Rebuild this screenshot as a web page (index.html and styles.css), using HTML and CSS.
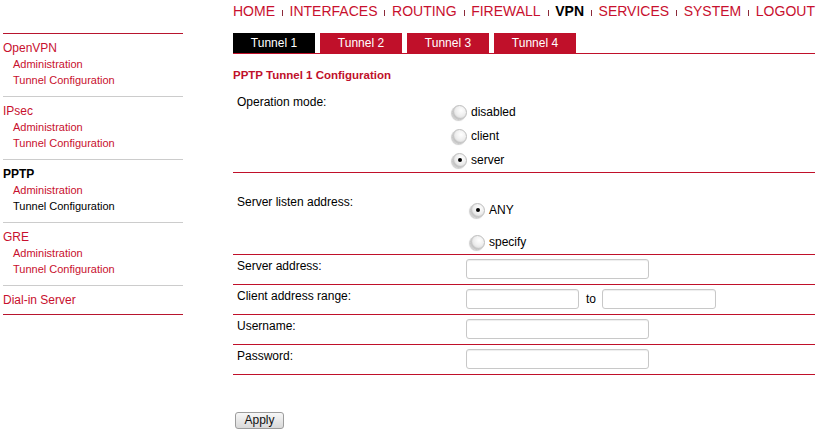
FILE: index.html
```html
<!DOCTYPE html>
<html>
<head>
<meta charset="utf-8">
<title>VPN - PPTP</title>
<link rel="stylesheet" href="styles.css">
</head>
<body>
<div class="page">
  <aside class="side">
    <div class="grp">
      <a class="gh">OpenVPN</a>
      <a class="gi">Administration</a>
      <a class="gi">Tunnel Configuration</a>
    </div>
    <div class="grp">
      <a class="gh">IPsec</a>
      <a class="gi">Administration</a>
      <a class="gi">Tunnel Configuration</a>
    </div>
    <div class="grp">
      <a class="gh cur">PPTP</a>
      <a class="gi">Administration</a>
      <a class="gi cur">Tunnel Configuration</a>
    </div>
    <div class="grp">
      <a class="gh">GRE</a>
      <a class="gi">Administration</a>
      <a class="gi">Tunnel Configuration</a>
    </div>
    <div class="grp last">
      <a class="gh">Dial-in Server</a>
    </div>
  </aside>

  <main class="main">
    <nav class="topnav">
      <a>HOME</a><span class="sep"></span>
      <a>INTERFACES</a><span class="sep"></span>
      <a>ROUTING</a><span class="sep"></span>
      <a>FIREWALL</a><span class="sep"></span>
      <a class="cur">VPN</a><span class="sep"></span>
      <a>SERVICES</a><span class="sep"></span>
      <a>SYSTEM</a><span class="sep"></span>
      <a>LOGOUT</a>
    </nav>

    <div class="tabs">
      <a class="tab cur">Tunnel 1</a>
      <a class="tab">Tunnel 2</a>
      <a class="tab">Tunnel 3</a>
      <a class="tab">Tunnel 4</a>
    </div>

    <h1 class="title">PPTP Tunnel 1 Configuration</h1>

    <div class="form">
      <div class="row row-mode">
        <div class="lbl">Operation mode:</div>
        <div class="opts">
          <label class="opt"><input type="radio" name="mode" class="radio"><span>disabled</span></label>
          <label class="opt"><input type="radio" name="mode" class="radio"><span>client</span></label>
          <label class="opt"><input type="radio" name="mode" class="radio" checked><span>server</span></label>
        </div>
      </div>
      <div class="row row-listen">
        <div class="lbl">Server listen address:</div>
        <div class="opts">
          <label class="opt"><input type="radio" name="listen" class="radio" checked><span>ANY</span></label>
          <label class="opt"><input type="radio" name="listen" class="radio"><span>specify</span></label>
        </div>
      </div>
      <div class="row row-in">
        <div class="lbl">Server address:</div>
        <div class="val"><input type="text" class="field"></div>
      </div>
      <div class="row row-in">
        <div class="lbl">Client address range:</div>
        <div class="val"><input type="text" class="field sm"><span class="to">to</span><input type="text" class="field sm2"></div>
      </div>
      <div class="row row-in">
        <div class="lbl">Username:</div>
        <div class="val"><input type="text" class="field"></div>
      </div>
      <div class="row row-in">
        <div class="lbl">Password:</div>
        <div class="val"><input type="password" class="field"></div>
      </div>
    </div>

    <button class="apply">Apply</button>
  </main>
</div>
</body>
</html>
```
FILE: styles.css
```css
* { box-sizing: border-box; }

body {
  margin: 0;
  font-family: "Liberation Sans", Arial, sans-serif;
  background: #fff;
  color: #000;
}

.page {
  display: flex;
  align-items: flex-start;
}

/* ---------- sidebar ---------- */
.side {
  width: 180px;
  margin-left: 3px;
  padding-top: 33px;
}

.grp {
  display: flex;
  flex-direction: column;
  border-top: 1px solid #cccccc;
  padding: 6px 0 8px;
}

.grp:first-child { border-top-color: #b8152e; }

.grp.last {
  padding-bottom: 6px;
  border-bottom: 1px solid #b8152e;
}

.gh {
  font-size: 12px;
  line-height: 16px;
  color: #c8102e;
}

.gh.cur { color: #000; font-weight: bold; }

.gi {
  font-size: 11px;
  line-height: 16px;
  padding-left: 10px;
  color: #c8102e;
}

.gi.cur { color: #000; }

/* ---------- main ---------- */
.main {
  margin-left: 50px;
  width: 582px;
}

.topnav {
  height: 33px;
  padding-top: 3px;
  display: flex;
  align-items: baseline;
  white-space: nowrap;
  font-size: 14px;
  line-height: 16px;
}

.topnav a { color: #c8102e; }
.topnav a.cur { color: #000; font-weight: bold; }

.sep {
  display: inline-block;
  width: 1px;
  height: 6px;
  margin: 0 7px -1px;
  background: #8c2a3a;
}

.tabs {
  display: flex;
  gap: 5px;
  height: 21px;
  border-bottom: 1px solid #c0102a;
}

.tab {
  width: 82px;
  height: 20px;
  background: #c0102a;
  color: #fff;
  font-size: 12px;
  line-height: 20px;
  text-align: center;
}

.tab.cur { background: #000; }

.title {
  margin: 14px 0 0;
  font-size: 11.5px;
  line-height: 14px;
  font-weight: bold;
  color: #c0102a;
}

/* ---------- form ---------- */
.row {
  display: flex;
  border-bottom: 1px solid #c0102a;
}

.lbl {
  width: 219px;
  padding-left: 4px;
  font-size: 12px;
  line-height: 14px;
}

.row-mode .lbl { padding-top: 13px; }
.row-mode .opts { padding-top: 18px; }

.row-listen .lbl { padding-top: 22px; }
.row-listen .opts {
  padding-top: 25px;
  margin-left: 18px;
  display: flex;
  flex-direction: column;
  gap: 8px;
}

.opt {
  display: flex;
  align-items: center;
  gap: 4px;
  height: 24px;
  font-size: 12px;
  line-height: 14px;
}

.radio {
  -webkit-appearance: none;
  appearance: none;
  margin: 0;
  width: 15px;
  height: 15px;
  border-radius: 50%;
  border: 1px solid #bdbdbd;
  background: radial-gradient(circle at 62% 35%, #ffffff 0%, #f0f0f0 40%, #d2d2d2 100%);
  box-shadow: inset 1px -1px 1px rgba(0, 0, 0, 0.14), -1px 1px 1px rgba(0, 0, 0, 0.2);
  display: flex;
  align-items: center;
  justify-content: center;
}

.radio:checked::after {
  content: "";
  width: 4px;
  height: 4px;
  border-radius: 50%;
  background: #000;
}

.row-in { height: 30px; }
.row-in .lbl { padding-top: 4px; }

.val {
  margin-left: 14px;
  padding-top: 4px;
  display: flex;
  align-items: center;
  height: 24px;
}

.field {
  width: 183px;
  height: 20px;
  padding: 0 3px;
  border: 1px solid #c8c8c8;
  border-radius: 3px;
  box-shadow: inset 0 1px 1px rgba(0, 0, 0, 0.07);
  background: #fff;
  font-size: 12px;
}

.field.sm { width: 113px; }
.field.sm2 { width: 114px; }

.to {
  margin: 0 6px 0 7px;
  font-size: 12px;
}

.apply {
  display: block;
  margin: 37px 0 0 2px;
  width: 49px;
  height: 17px;
  padding: 0;
  border: 1px solid #9c9c9c;
  border-radius: 3px;
  background: linear-gradient(#f7f7f7, #d9d9d9);
  font-family: "Liberation Sans", Arial, sans-serif;
  font-size: 12px;
  line-height: 15px;
  color: #111;
}
```
